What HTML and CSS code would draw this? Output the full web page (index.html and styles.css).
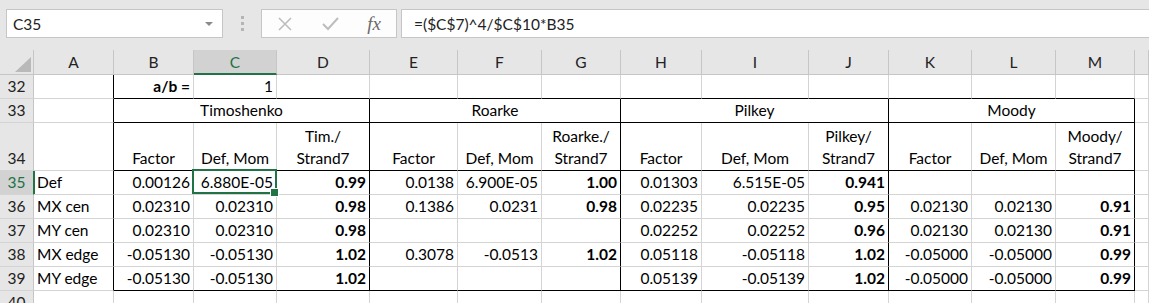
FILE: index.html
```html
<!DOCTYPE html>
<html>
<head>
    <meta charset="UTF-8">
    <title>Plate factors</title>
    <link rel="stylesheet" href="styles.css">
</head>
<body>
    <div class="formula-bar">
        <div class="name-box">
            <span>C35</span>
            <span class="drop"></span>
        </div>
        <div class="grip"><i></i><i></i><i></i></div>
        <div class="fx-buttons">
            <span class="fx-btn">
                <svg width="14" height="14" viewBox="0 0 14 14"><path d="M1 1 L13 13 M13 1 L1 13" stroke="#bdbdbd" stroke-width="1.6" fill="none"/></svg>
            </span>
            <span class="fx-btn">
                <svg width="17" height="14" viewBox="0 0 17 14"><path d="M1 7 L6 12 L16 1" stroke="#bdbdbd" stroke-width="2" fill="none"/></svg>
            </span>
            <span class="fx-btn fx">fx</span>
        </div>
        <div class="formula-box">=($C$7)^4/$C$10*B35</div>
    </div>

    <div class="sheet" id="sheet"></div>

    <script>
        const sheet = document.getElementById('sheet');

        function cell(text, cls) {
            const d = document.createElement('div');
            d.className = 'cell ' + (cls || '');
            d.innerHTML = '<span>' + text + '</span>';
            sheet.appendChild(d);
            return d;
        }

        // column headers
        cell('<svg width="16" height="15" viewBox="0 0 16 15"><path d="M16 0 L16 15 L0 15 Z" fill="#b9b9b9"/></svg>', 'corner');
        'ABCDEFGHIJKLM'.split('').forEach(l => cell(l, 'col-head' + (l === 'C' ? ' sel-col' : '')));
        cell('', 'col-head');

        // row 32
        cell('32', 'row-head');
        cell('', 'kr');
        cell('a/b =', 'r b kb');
        cell('1', 'r kb');
        for (let i = 0; i < 10; i++) cell('', 'kb');
        cell('');

        // row 33
        cell('33', 'row-head');
        cell('', 'kr');
        ['Timoshenko', 'Roarke', 'Pilkey', 'Moody'].forEach(n => cell(n, 'c span3 kr kb'));
        cell('');

        // row 34
        cell('34', 'row-head');
        cell('', 'kr');
        ['Tim./', 'Roarke./', 'Pilkey/', 'Moody/'].forEach(n => {
            cell('Factor', 'c kb');
            cell('Def, Mom', 'c kb');
            cell(n + '<br>Strand7', 'c kb kr');
        });
        cell('');

        const rows = [
            [35, 'Def', '0.00126', '6.880E-05', '0.99', '0.0138', '6.900E-05', '1.00', '0.01303', '6.515E-05', '0.941', '', '', ''],
            [36, 'MX cen', '0.02310', '0.02310', '0.98', '0.1386', '0.0231', '0.98', '0.02235', '0.02235', '0.95', '0.02130', '0.02130', '0.91'],
            [37, 'MY cen', '0.02310', '0.02310', '0.98', '', '', '', '0.02252', '0.02252', '0.96', '0.02130', '0.02130', '0.91'],
            [38, 'MX edge', '-0.05130', '-0.05130', '1.02', '0.3078', '-0.0513', '1.02', '0.05118', '-0.05118', '1.02', '-0.05000', '-0.05000', '0.99'],
            [39, 'MY edge', '-0.05130', '-0.05130', '1.02', '', '', '', '0.05139', '-0.05139', '1.02', '-0.05000', '-0.05000', '0.99']
        ];

        rows.forEach((r, i) => {
            cell(r[0], 'row-head' + (r[0] === 35 ? ' sel-row' : ''));
            cell(r[1], 'l kr');
            for (let j = 2; j < 14; j++) {
                let cls = 'r';
                if ((j - 1) % 3 === 0) cls += ' b kr';
                if (i === rows.length - 1) cls += ' kb';
                const d = cell(r[j], cls);
                if (r[0] === 35 && j === 3) d.classList.add('active');
            }
            cell('');
        });

        // row 40
        cell('40', 'row-head');
        for (let i = 0; i < 14; i++) cell('');
    </script>
</body>
</html>
```

FILE: styles.css
```css
* {
    margin: 0;
    padding: 0;
    box-sizing: border-box;
}

body {
    font-family: Lato, "Liberation Sans", sans-serif;
    font-size: 15.5px;
    color: #000;
    background: #fff;
    width: 1149px;
    height: 303px;
    overflow: hidden;
}

/* formula bar */
.formula-bar {
    height: 50px;
    background: #e6e6e6;
    display: flex;
    align-items: flex-start;
    padding: 9px 0 0 6px;
}

.name-box {
    width: 217px;
    height: 29px;
    background: #fff;
    border: 1px solid #c6c6c6;
    display: flex;
    align-items: center;
    justify-content: space-between;
    padding: 0 9px 0 6px;
    color: #222;
}

.drop {
    width: 0;
    height: 0;
    border-left: 4px solid transparent;
    border-right: 4px solid transparent;
    border-top: 4px solid #8a8a8a;
}

.grip {
    width: 38px;
    height: 29px;
    display: flex;
    flex-direction: column;
    align-items: center;
    justify-content: center;
    gap: 3px;
}

.grip i {
    width: 3px;
    height: 3px;
    background: #b4b4b4;
}

.fx-buttons {
    width: 136px;
    height: 29px;
    background: #fdfdfd;
    border: 1px solid #c6c6c6;
    display: flex;
    align-items: center;
}

.fx-btn {
    width: 44px;
    display: flex;
    justify-content: center;
}

.fx-btn:first-child {
    width: 46px;
}

.fx {
    font-family: "Liberation Serif", serif;
    font-style: italic;
    font-size: 19px;
    color: #6a6a6a;
}

.formula-box {
    flex: 1;
    height: 29px;
    margin-left: 4px;
    margin-right: -2px;
    background: #fff;
    border: 1px solid #c6c6c6;
    display: flex;
    align-items: center;
    padding-left: 12px;
    color: #222;
}

/* sheet grid */
.sheet {
    display: grid;
    grid-template-columns: 34px 80px 80px 83px 93px 88px 84px 79px 81px 107px 80px 83px 84px 79px 1fr;
    grid-template-rows: 25px 24px 24px 48px repeat(5, 24px) 24px;
}

.cell {
    border-right: 1px solid #d4d4d4;
    border-bottom: 1px solid #d4d4d4;
    padding: 0 3px 1px;
    line-height: 22px;
    white-space: nowrap;
    overflow: hidden;
    display: flex;
    flex-direction: column;
    justify-content: flex-end;
}

.l { text-align: left; }
.r { text-align: right; }
.c { text-align: center; }
.b { font-weight: bold; }
.kr { border-right-color: #000; }
.kb { border-bottom-color: #000; }
.span3 { grid-column: span 3; }

.corner {
    background: #e6e6e6;
    border-right-color: #c6c6c6;
    border-bottom-color: #c6c6c6;
    align-items: flex-end;
    padding: 0 2px 2px 0;
}

.corner span {
    display: flex;
}

.col-head {
    background: #e6e6e6;
    border-right-color: #c6c6c6;
    border-bottom-color: #c6c6c6;
    text-align: center;
    color: #222;
}

.sel-col {
    background: #d2d2d2;
    color: #217346;
    border-bottom: 2px solid #217346;
    padding-bottom: 0;
}

.row-head {
    background: #e6e6e6;
    border-right-color: #c6c6c6;
    border-bottom-color: #d4d4d4;
    text-align: center;
    color: #222;
    padding: 0 0 1px;
}

.sel-row {
    background: #d2d2d2;
    color: #217346;
    border-right-color: #217346;
    box-shadow: 1px 0 0 #217346;
}

.active {
    position: relative;
    overflow: visible;
}

.active::after {
    content: "";
    position: absolute;
    left: -2px;
    top: -2px;
    right: -1px;
    bottom: 0;
    border: 2px solid #217346;
}

.active::before {
    content: "";
    position: absolute;
    right: -3px;
    bottom: -3px;
    width: 7px;
    height: 7px;
    background: #217346;
    border: 1px solid #fff;
    z-index: 1;
}
```
